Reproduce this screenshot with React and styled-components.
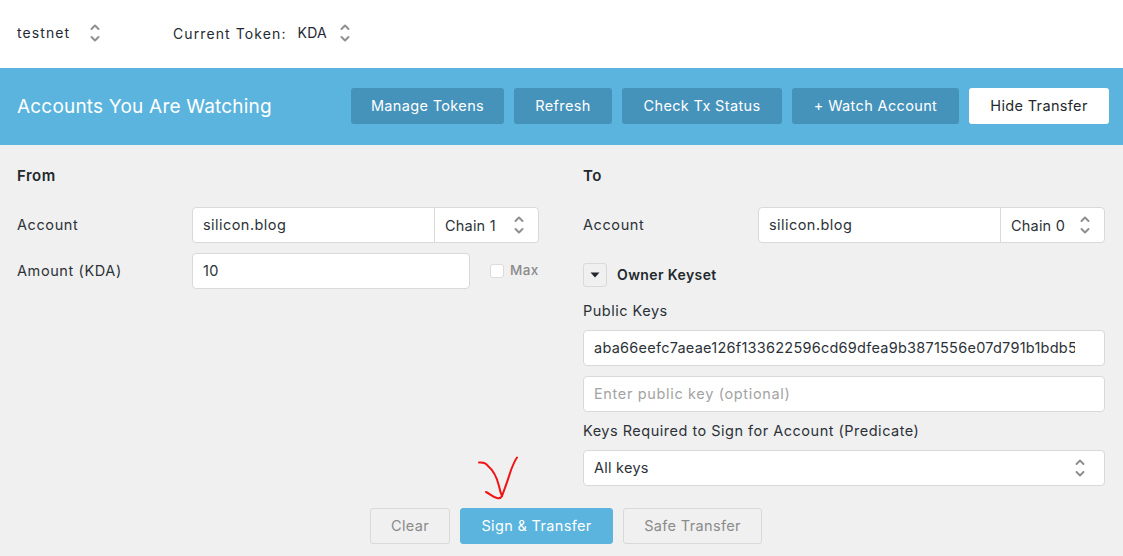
import React from "react";
import styled, { createGlobalStyle } from "styled-components";

const Global = createGlobalStyle`
  html, body { margin: 0; padding: 0; background: #f0f0f0; }
  body { font-family: Inter, "Liberation Sans", sans-serif; color: #23282d; overflow: hidden; }
  * { box-sizing: border-box; }
`;
const Page = styled.div`width: 1123px; height: 556px; position: relative; overflow: hidden; background: #f0f0f0;`;
const TopBar = styled.div`height: 68px; background: #fff; display: flex; align-items: center; padding: 0 0 2px 17px; font-size: 14px; color: #1f2a33;`;
const TopItem = styled.div`display: flex; align-items: center; width: ${p => p.$w}px;`;
const TopLabel = styled.span`margin-right: 11px; letter-spacing: 1.1px;`;
const TopValue = styled.span`width: ${p => p.$w}px; letter-spacing: ${p => p.$ls}px; margin-top: -1px;`;
const Header = styled.div`height: 77px; background: #5ab4de; display: flex; align-items: center; padding: 0 14px 1px 17px;`;
const Title = styled.h1`flex: 1; margin: 0; font-size: 19px; font-weight: 400; color: #fff; letter-spacing: 0.2px;`;
const HeadBtn = styled.button`
  height: 36px; width: ${p => p.$w}px; margin-left: 10px; border: 0; border-radius: 3px;
  background: ${p => p.$light ? "#fff" : "#4592bb"}; color: ${p => p.$light ? "#23282d" : "#fff"};
  font: 400 14.5px Inter, sans-serif; letter-spacing: 0.35px; padding: 0 0 2px;
`;
const Body = styled.div`display: grid; grid-template-columns: 522px 522px; column-gap: 44px; padding: 22px 0 0 17px;`;
const Column = styled.section`display: flex; flex-direction: column;`;
const Heading = styled.h2`margin: 0 0 22px; height: 18px; line-height: 18px; font-size: 15px; font-weight: 600; letter-spacing: 0.5px; color: #23282d;`;
const Row = styled.div`display: flex; align-items: center; height: 36px; margin-bottom: 10px;`;
const FieldLabel = styled.label`width: 175px; flex: none; padding-bottom: 2px; font-size: 14.5px; letter-spacing: 0.6px; color: #2c3238;`;
const Group = styled.div`
  flex: 1; height: 36px; display: flex; background: #fff; border: 1px solid #d9d9d9; border-radius: 4px;
`;
const GroupInput = styled.div`
  flex: 1; padding-left: 10px; line-height: 34px; font-size: 14.5px; letter-spacing: 0.45px; color: #2c3238;
`;
const ChainSelect = styled.div`
  width: 104px; flex: none; border-left: 1px solid #d9d9d9; display: flex; align-items: center; justify-content: space-between;
  padding: 0 14px 0 10px; font-size: 14.5px; letter-spacing: 0.2px; color: #2c3238;
`;
const Field = styled.div`
  width: ${p => p.$w ? p.$w + "px" : "100%"}; height: 36px; background: #fff; border: 1px solid #d9d9d9; border-radius: 4px;
  padding: 0 ${p => p.$pr ?? 10}px 0 10px; line-height: 34px; font-size: 14.5px; letter-spacing: ${p => p.$ls ?? 0.25}px; white-space: nowrap; overflow: hidden;
  color: ${p => p.$muted ? "#a3a3a3" : "#2c3238"}; display: flex; align-items: center; justify-content: space-between;
`;
const ClipText = styled.span`display: block; overflow: hidden; width: 481px;`;
const Check = styled.span`width: 14px; height: 14px; margin-left: 20px; background: #fff; border: 1px solid #dcdcdc; border-radius: 3px;`;
const Max = styled.span`margin-left: 6px; padding-bottom: 2px; font-size: 13.5px; font-weight: 500; letter-spacing: 0.4px; color: #8b8b8b;`;
const KeysetRow = styled.div`display: flex; align-items: center; height: 24px; margin: 10px 0 15px;`;
const Toggle = styled.button`
  width: 24px; height: 24px; padding: 0; border: 1px solid #d9d9d9; border-radius: 3px; background: #f0f0f0;
  display: flex; align-items: center; justify-content: center;
`;
const KeysetTitle = styled.span`margin-left: 10px; padding-bottom: 1px; font-size: 14px; font-weight: 600; letter-spacing: 0.4px; color: #23282d;`;
const StackLabel = styled.div`height: 18px; line-height: 18px; margin-bottom: 10px; font-size: 14.5px; letter-spacing: 0.5px; color: #2c3238;`;
const Gap = styled.div`height: ${p => p.$h}px;`;
const Footer = styled.div`display: flex; gap: 10px; justify-content: center; padding: 22px 0 0 9px;`;
const FootBtn = styled.button`
  height: 36px; width: ${p => p.$w}px; padding: 0 0 2px; border-radius: 3px;
  border: 1px solid ${p => p.$primary ? "#5ab4de" : "#d9d9d9"};
  background: ${p => p.$primary ? "#5ab4de" : "#f0f0f0"}; color: ${p => p.$primary ? "#fff" : "#8b8b8b"};
  font: 400 14.5px Inter, sans-serif; letter-spacing: 0.35px;
`;
const Scribble = styled.svg`position: absolute; left: 470px; top: 450px; width: 60px; height: 55px; pointer-events: none;`;

const Updown = () => (
  <svg width="10" height="20" viewBox="0 0 10 20" fill="none" stroke="#8f8f8f" strokeWidth="2" strokeLinecap="round" strokeLinejoin="round">
    <path d="M1.500 6 L5 2.500 L8.500 6" />
    <path d="M1.500 14 L5 17.500 L8.500 14" />
  </svg>
);

export default function App() {
  return (
    <Page>
      <Global />
      <TopBar>
        <TopItem $w={156}>
          <TopValue $w={73} $ls={1.1}>testnet</TopValue>
          <Updown />
        </TopItem>
        <TopItem $w={300}>
          <TopLabel>Current Token:</TopLabel>
          <TopValue $w={42} $ls={0.2}>KDA</TopValue>
          <Updown />
        </TopItem>
      </TopBar>
      <Header>
        <Title>Accounts You Are Watching</Title>
        <HeadBtn $w={153}>Manage Tokens</HeadBtn>
        <HeadBtn $w={98}>Refresh</HeadBtn>
        <HeadBtn $w={160}>Check Tx Status</HeadBtn>
        <HeadBtn $w={167}>+ Watch Account</HeadBtn>
        <HeadBtn $w={140} $light>Hide Transfer</HeadBtn>
      </Header>
      <Body>
        <Column>
          <Heading>From</Heading>
          <Row>
            <FieldLabel>Account</FieldLabel>
            <Group>
              <GroupInput>silicon.blog</GroupInput>
              <ChainSelect>Chain 1<Updown /></ChainSelect>
            </Group>
          </Row>
          <Row>
            <FieldLabel>Amount (KDA)</FieldLabel>
            <Field $w={278}>10</Field>
            <Check />
            <Max>Max</Max>
          </Row>
        </Column>
        <Column>
          <Heading>To</Heading>
          <Row>
            <FieldLabel>Account</FieldLabel>
            <Group>
              <GroupInput>silicon.blog</GroupInput>
              <ChainSelect>Chain 0<Updown /></ChainSelect>
            </Group>
          </Row>
          <KeysetRow>
            <Toggle>
              <svg width="10" height="6" viewBox="0 0 10 6"><path d="M0.5 0.5 H9.5 L5 5.5 Z" fill="#23282d" /></svg>
            </Toggle>
            <KeysetTitle>Owner Keyset</KeysetTitle>
          </KeysetRow>
          <StackLabel>Public Keys</StackLabel>
          <Field><ClipText>aba66eefc7aeae126f133622596cd69dfea9b3871556e07d791b1bdb5</ClipText></Field>
          <Gap $h={10} />
          <Field $muted $ls={0.65}>Enter public key (optional)</Field>
          <Gap $h={10} />
          <StackLabel>Keys Required to Sign for Account (Predicate)</StackLabel>
          <Field $pr={19}>All keys<Updown /></Field>
        </Column>
      </Body>
      <Footer>
        <FootBtn $w={80}>Clear</FootBtn>
        <FootBtn $w={153} $primary>Sign &amp; Transfer</FootBtn>
        <FootBtn $w={139}>Safe Transfer</FootBtn>
      </Footer>
      <Scribble viewBox="0 0 60 55" fill="none" stroke="#f01414" strokeWidth="2" strokeLinecap="round" strokeLinejoin="round">
        <path d="M9 12.5 C13 12 16 13 18 16 C23 20 27 28 29 36 C30 41 31 44 32 46 C35 38 38 30 41 20 C43 15 45 10 47 7.5" />
        <path d="M16 42 C20 44 23 47 27 48 C29 48.500 31 48 32 46" />
      </Scribble>
    </Page>
  );
}
